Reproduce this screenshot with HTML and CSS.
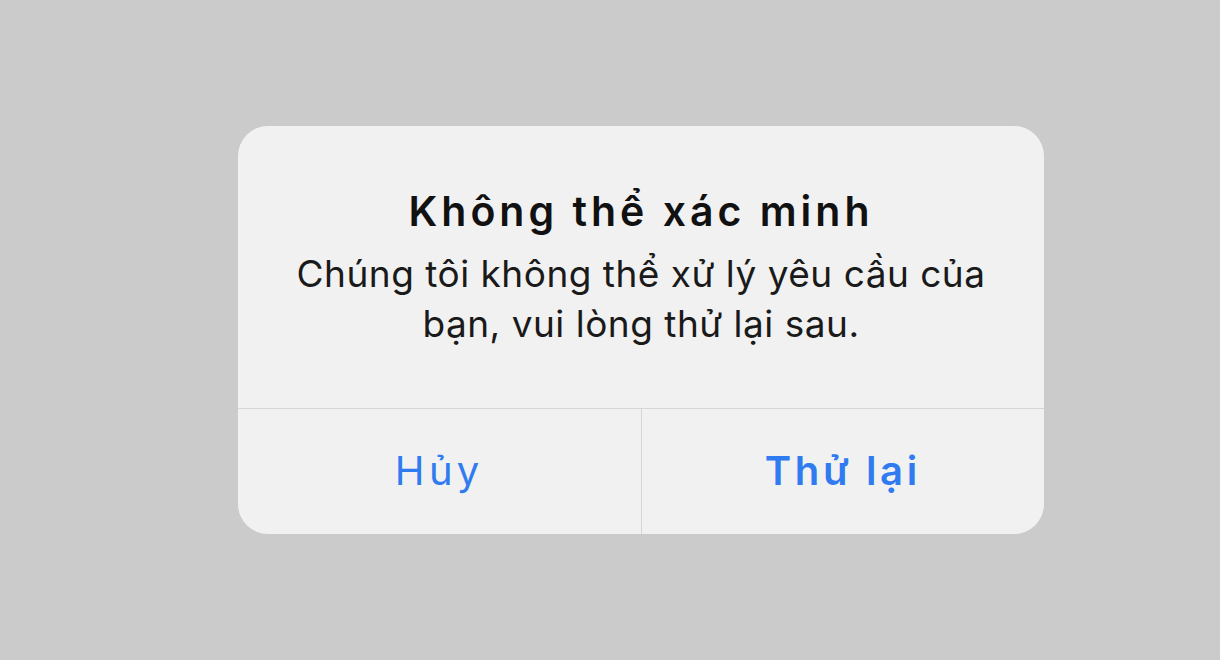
FILE: index.html
```html
<!DOCTYPE html>
<html>
<head>
  <title>Không thể xác minh</title>
  <link rel="stylesheet" href="styles.css">
</head>
<body>
  <div class="screen">
    <div class="alert" role="alertdialog">
      <div class="alert-body">
        <h1 class="alert-title">Không thể xác minh</h1>
        <p class="alert-text">Chúng tôi không thể xử lý yêu cầu của bạn, vui lòng thử lại sau.</p>
      </div>
      <div class="alert-actions">
        <button class="alert-btn">Hủy</button>
        <button class="alert-btn primary">Thử lại</button>
      </div>
    </div>
  </div>
</body>
</html>
```

FILE: styles.css
```css
html, body {
  margin: 0;
  height: 100%;
  background: #cbcbcb;
}

body {
  font-family: Inter, "Noto Sans", sans-serif;
}

.screen {
  padding: 126px 0 0 238px;
}

/* ALERT BOX */
.alert {
  width: 806px;
  background: #f1f1f1;
  border-radius: 30px;
  overflow: hidden;
}

.alert-body {
  height: 283px;
  padding: 57px 40px 0;
  box-sizing: border-box;
  text-align: center;
  border-bottom: 1px solid #d6d6d6;
}

.alert-title {
  margin: 0;
  font-size: 41px;
  font-weight: 600;
  letter-spacing: 4px;
  line-height: 56px;
  color: #111;
}

.alert-text {
  margin: 10px 0 0;
  font-size: 37px;
  letter-spacing: 0.5px;
  line-height: 50px;
  color: #1a1a1a;
}

/* BUTTON ROW */
.alert-actions {
  display: flex;
  height: 125px;
}

.alert-btn {
  flex: 1;
  padding: 0 0 2px;
  border: 0;
  background: none;
  font-family: inherit;
  font-size: 40px;
  letter-spacing: 4.3px;
  color: #2f7bef;
  cursor: pointer;
}

.alert-btn + .alert-btn {
  border-left: 1px solid #d6d6d6;
}

.alert-btn.primary {
  font-weight: 600;
  letter-spacing: 3.6px;
}
```
